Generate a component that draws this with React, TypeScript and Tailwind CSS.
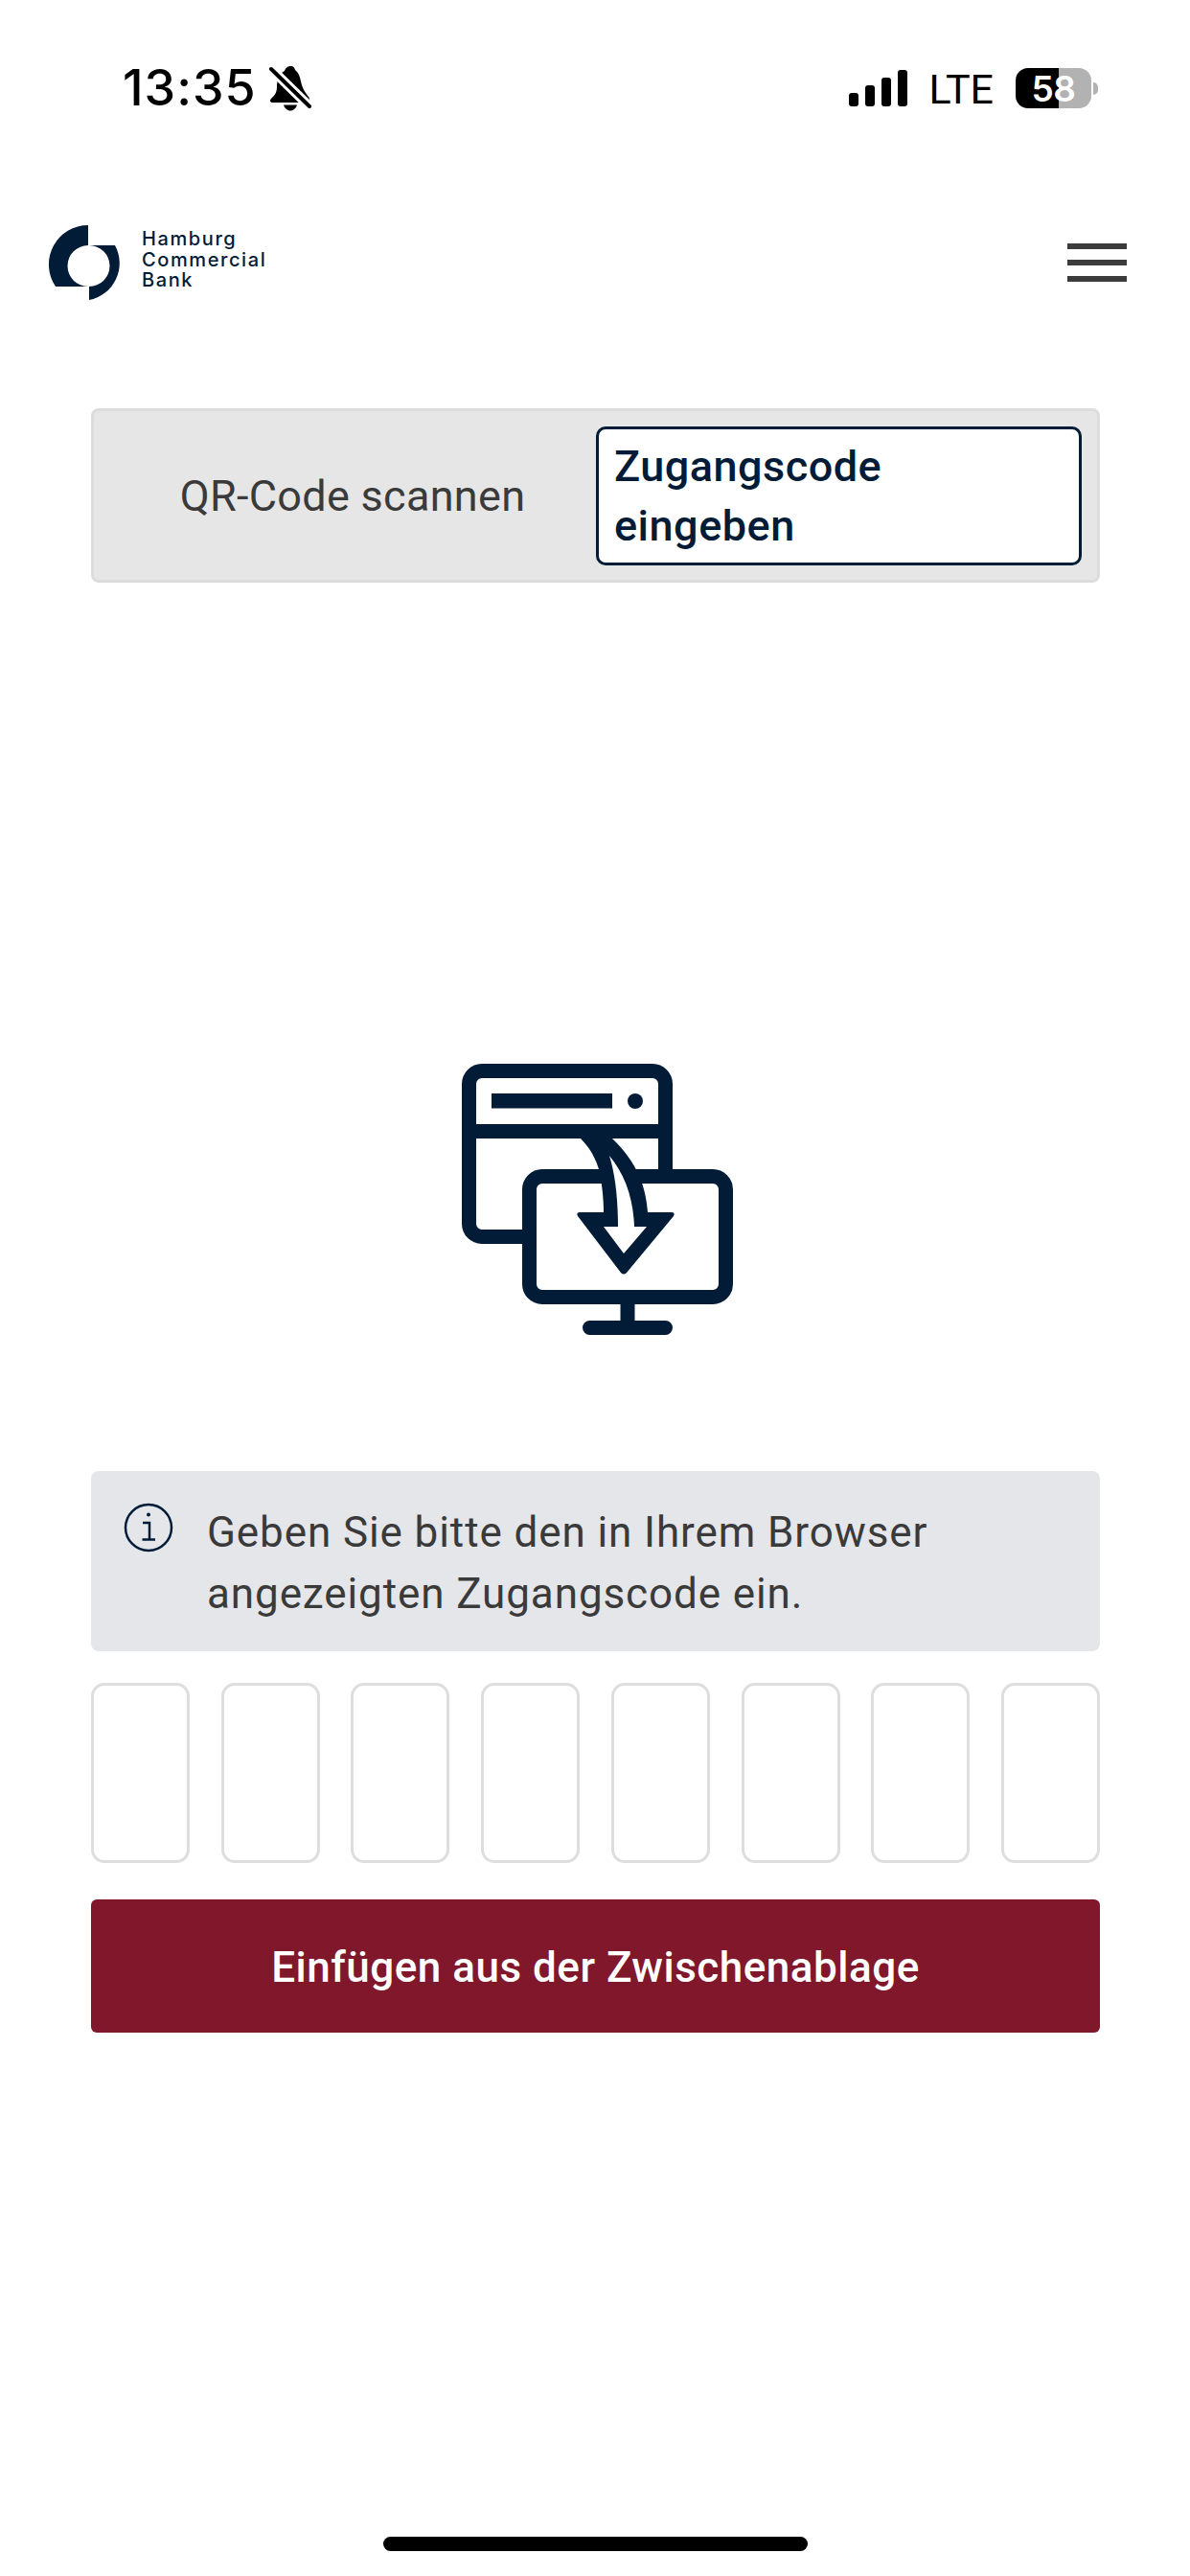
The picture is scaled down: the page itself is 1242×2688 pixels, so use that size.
const navy = "#021c38";

function BellSlash() {
  return (
    <svg width="44" height="48" viewBox="280 69 44 48" className="ml-[13px] shrink-0">
      <path d="M303 70C299 70 297 72 296 75C290 78 288 84 288 92C288 98 285 101 282 104C280 106 281 108 284 108H318C322 108 323 105 321 102C317 97 314 92 313 86C312 80 310 76 307 74C306 71 305 70 303 70Z" fill="#000" />
      <path d="M295 110.500H309C308 114 305 116.500 302 116.500S296 114 295 110.500Z" fill="#000" />
      <path d="M278 69L326 116" stroke="#fff" strokeWidth="10" />
      <path d="M282 73L322 112" stroke="#000" strokeWidth="4" strokeLinecap="round" />
    </svg>
  );
}

function Signal() {
  return (
    <div className="flex items-end gap-[7px] h-[38px]">
      <div className="w-[10px] h-[14px] rounded-[3px] bg-black" />
      <div className="w-[10px] h-[22px] rounded-[3px] bg-black" />
      <div className="w-[10px] h-[30px] rounded-[3px] bg-black" />
      <div className="w-[10px] h-[38px] rounded-[3px] bg-black" />
    </div>
  );
}

function Battery() {
  return (
    <div className="flex items-center">
      <div className="w-[79px] h-[42px] rounded-[13px] bg-[linear-gradient(90deg,#000_57%,#b2b2b2_57%)] flex items-center justify-center text-white text-[37px] leading-none font-semibold font-['Inter',sans-serif] tracking-[-0.5px]">
        58
      </div>
      <div className="ml-[2px] w-[5px] h-[13px] rounded-r-[6px] bg-[#b2b2b2]" />
    </div>
  );
}

function Logo() {
  return (
    <svg width="80" height="80" viewBox="50 234 80 80" className="shrink-0">
      <path d="M92 235V256A21.500 21.500 0 0 0 92 299H58A41 41 0 0 1 92 235Z" fill={navy} />
      <path d="M93 256H120A39 39 0 0 1 93 313V299A21.500 21.500 0 0 0 93 256Z" fill={navy} />
    </svg>
  );
}

function TransferIcon() {
  return (
    <svg width="320" height="320" viewBox="0 0 320 320" fill="none">
      <path d="M84 200.500H41A13.500 13.500 0 0 1 27.500 187V41A13.500 13.500 0 0 1 41 27.500H219A13.500 13.500 0 0 1 232.500 41V137" stroke={navy} strokeWidth="15" />
      <path d="M35 90.500H225" stroke={navy} strokeWidth="15" />
      <rect x="51" y="51" width="126" height="15.500" fill={navy} />
      <circle cx="201" cy="59" r="8" fill={navy} />
      <rect x="90.500" y="137.500" width="205" height="126" rx="13.500" stroke={navy} strokeWidth="15" />
      <path d="M193 270V290" stroke={navy} strokeWidth="15" />
      <path d="M153.500 295.500H232.500" stroke={navy} strokeWidth="15" strokeLinecap="round" />
      <path d="M144 98C156 110 163 125 165 140C167 152 168 165 168 175H143Q139 175 141 179L186 238Q189 241 192 238L241 179Q243 175 239 175H214C212 150 205 125 177 98Z" fill={navy} />
      <path d="M174 116C180 135 183 160 183 190H168L189 218L213 190H200C199 160 190 135 174 116Z" fill="#fff" />
    </svg>
  );
}

function InfoIcon() {
  return (
    <svg width="52" height="52" viewBox="0 0 52 52" fill="none" className="shrink-0">
      <circle cx="26" cy="26" r="24" stroke={navy} strokeWidth="2.500" />
      <circle cx="26" cy="12.500" r="2" fill={navy} />
      <path d="M20 21H27V38M19.500 38.500H33" stroke={navy} strokeWidth="2.500" />
    </svg>
  );
}

export default function App() {
  const boxes = [0, 1, 2, 3, 4, 5, 6, 7];
  return (
    <div className="w-[1242px] h-[2688px] bg-white flex flex-col font-['Roboto',sans-serif] overflow-hidden">
      <div className="h-[130px] pt-[68px] pl-[128px] pr-[96px] flex items-start justify-between">
        <div className="flex items-center h-[48px]">
          <span className="text-[52px] leading-none font-medium text-black font-['Inter',sans-serif] tracking-[1px]">13:35</span>
          <BellSlash />
        </div>
        <div className="flex items-center h-[48px]">
          <Signal />
          <span className="ml-[23px] mr-[23px] mt-[2px] text-[43px] leading-none text-black font-['Roboto',sans-serif]">LTE</span>
          <Battery />
        </div>
      </div>

      <div className="h-[296px] pt-[104px] pl-[50px] pr-[66px] flex items-start justify-between">
        <div className="flex items-start">
          <Logo />
          <div className="ml-[18px] mt-[5px] text-[20px] leading-[21.500px] font-medium text-[#021c38] font-['Inter',sans-serif] tracking-[1.6px]">
            <div>Hamburg</div>
            <div>Commercial</div>
            <div>Bank</div>
          </div>
        </div>
        <div className="mt-[20px] flex flex-col gap-[11px]">
          <div className="w-[62px] h-[6px] bg-[#3c3c3c]" />
          <div className="w-[62px] h-[6px] bg-[#3c3c3c]" />
          <div className="w-[62px] h-[6px] bg-[#3c3c3c]" />
        </div>
      </div>

      <div className="pl-[95px] pr-[94px] flex flex-col">
        <div className="h-[182px] rounded-[8px] border-[3px] border-[#dcdcdc] bg-[#e6e6e6] flex items-center pl-[16px] pr-[16px]">
          <div className="w-[508px] pt-[2px] text-center text-[45px] text-[#3a3a3a] tracking-[0.3px]">QR-Code scannen</div>
          <div className="w-[507px] h-[145px] rounded-[10px] border-[3px] border-[#021c38] bg-white pl-[16px] pt-[2px] flex flex-col justify-center text-[45px] leading-[62px] font-medium text-[#021c38] tracking-[0.5px]">
            <div>Zugangscode</div>
            <div>eingeben</div>
          </div>
        </div>

        <div className="mt-[482px] flex justify-center">
          <TransferIcon />
        </div>

        <div className="mt-[125px] h-[188px] rounded-[8px] bg-[#e5e6ea] pl-[34px] pt-[33px] flex items-start">
          <InfoIcon />
          <div className="ml-[35px] -mt-[1px] text-[44px] leading-[64px] text-[#3a3a3a] tracking-[0.9px]">
            <div>Geben Sie bitte den in Ihrem Browser</div>
            <div>angezeigten Zugangscode ein.</div>
          </div>
        </div>

        <div className="mt-[33px] flex justify-between">
          {boxes.map((b) => (
            <div key={b} className="w-[103px] h-[188px] rounded-[14px] border-[3px] border-[#dedede] bg-white" />
          ))}
        </div>

        <div className="mt-[38px] h-[139px] pt-[2px] rounded-[6px] bg-[#80172b] flex items-center justify-center text-[44px] font-medium text-white tracking-[0.5px]">
          Einfügen aus der Zwischenablage
        </div>
      </div>

      <div className="mt-auto mb-[26px] self-center w-[443px] h-[15px] rounded-[8px] bg-black" />
    </div>
  );
}
